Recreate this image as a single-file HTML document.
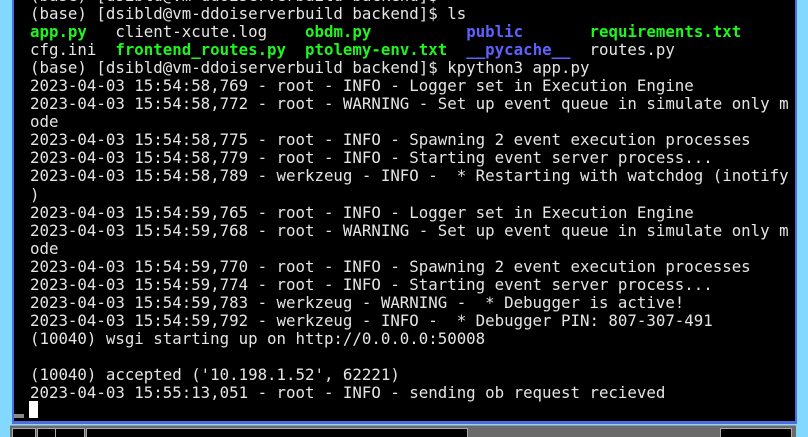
<!DOCTYPE html>
<html><head><style>
html,body{margin:0;padding:0;width:808px;height:436px;overflow:hidden;background:#82d8ff;}
#term{position:absolute;left:12px;top:0;width:781px;height:421px;background:#000;border-left:2px solid #4a6ee0;border-right:2px solid #4a6ee0;border-bottom:3px solid #4a6ee0;}
pre{position:absolute;left:30px;top:-13px;margin:0;font-family:"DejaVu Sans Mono","Liberation Mono",monospace;font-size:15.75px;line-height:18.05px;color:#e5e5e5;}
.g{color:#1ef51e;font-weight:bold}
.b{color:#6060ff;font-weight:bold}
#cur{position:absolute;left:29px;top:401px;width:9px;height:17px;background:#fff;}
#sm{position:absolute;left:14px;top:414px;width:10px;height:4px;background:#888;}
#bar{position:absolute;left:10px;top:425px;width:786px;height:11px;background:#6a6a6a;border-top:1px solid #999;}
.c{position:absolute;top:428px;height:8px;background:#000;border:1px solid #aaa;border-bottom:none}
</style></head><body>
<div id="term"></div>
<pre>(base) [dsibld@vm-ddoiserverbuild backend]$ 
(base) [dsibld@vm-ddoiserverbuild backend]$ ls
<span class="g">app.py</span>   client-xcute.log    <span class="g">obdm.py</span>          <span class="b">public</span>       <span class="g">requirements.txt</span>
cfg.ini  <span class="g">frontend_routes.py</span>  <span class="g">ptolemy-env.txt</span>  <span class="b">__pycache__</span>  routes.py
(base) [dsibld@vm-ddoiserverbuild backend]$ kpython3 app.py
2023-04-03 15:54:58,769 - root - INFO - Logger set in Execution Engine
2023-04-03 15:54:58,772 - root - WARNING - Set up event queue in simulate only m
ode
2023-04-03 15:54:58,775 - root - INFO - Spawning 2 event execution processes
2023-04-03 15:54:58,779 - root - INFO - Starting event server process...
2023-04-03 15:54:58,789 - werkzeug - INFO -  * Restarting with watchdog (inotify
)
2023-04-03 15:54:59,765 - root - INFO - Logger set in Execution Engine
2023-04-03 15:54:59,768 - root - WARNING - Set up event queue in simulate only m
ode
2023-04-03 15:54:59,770 - root - INFO - Spawning 2 event execution processes
2023-04-03 15:54:59,774 - root - INFO - Starting event server process...
2023-04-03 15:54:59,783 - werkzeug - WARNING -  * Debugger is active!
2023-04-03 15:54:59,792 - werkzeug - INFO -  * Debugger PIN: 807-307-491
(10040) wsgi starting up on http://0.0.0.0:50008

(10040) accepted ('10.198.1.52', 62221)
2023-04-03 15:55:13,051 - root - INFO - sending ob request recieved
</pre>
<div id="cur"></div><div id="sm"></div>
<div id="bar"></div>
<div class="c" style="left:12px;width:22px"></div>
<div class="c" style="left:37px;width:20px"></div>
<div class="c" style="left:55px;width:28px"></div>
<div class="c" style="left:86px;width:380px"></div>
<div class="c" style="left:720px;width:70px"></div>
</body></html>
